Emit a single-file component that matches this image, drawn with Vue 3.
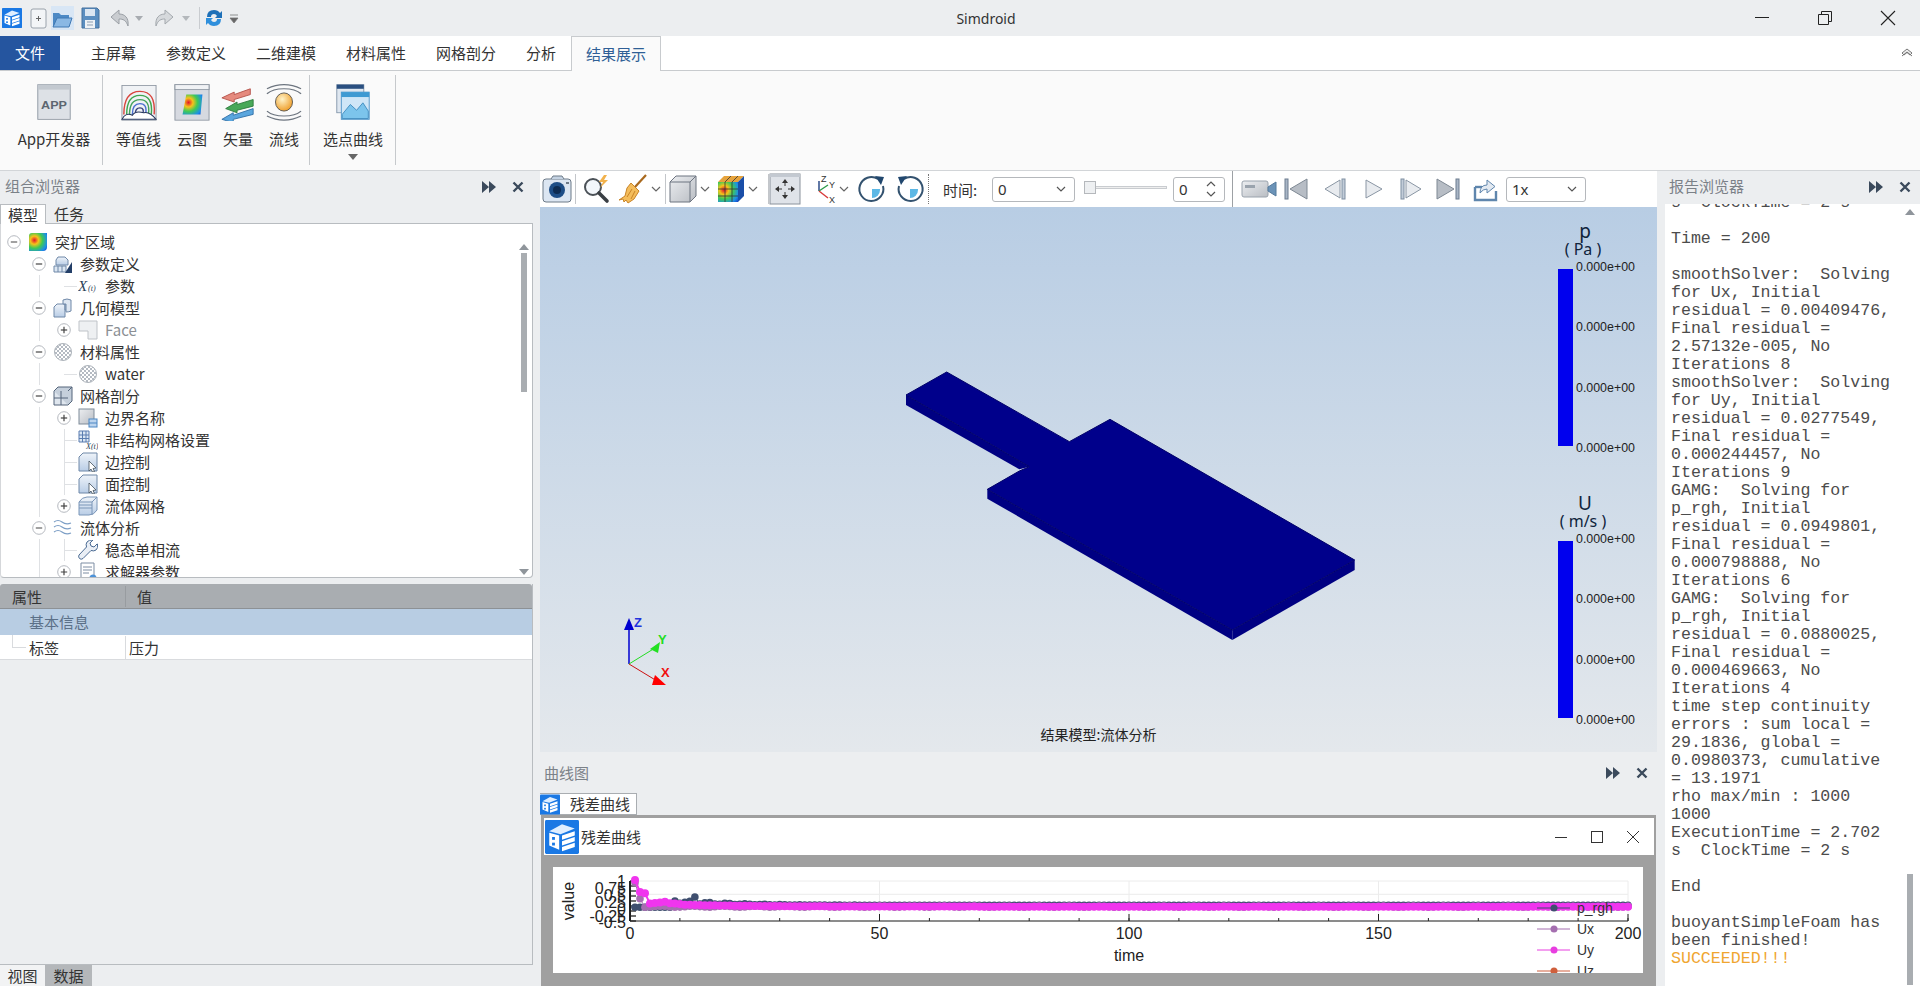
<template>
  <div class="app">
    <!-- shared icons -->
    <svg class="defs" width="0" height="0">
      <defs>
        <radialGradient id="g-heat" cx="0.3" cy="0.4" r="0.9">
          <stop offset="0" stop-color="#e3142b" />
          <stop offset="0.25" stop-color="#f6c21a" />
          <stop offset="0.5" stop-color="#3fca55" />
          <stop offset="0.8" stop-color="#1c8fe8" />
          <stop offset="1" stop-color="#1747c8" />
        </radialGradient>
        <linearGradient id="g-steel" x1="0" y1="0" x2="0" y2="1">
          <stop offset="0" stop-color="#eef3f9" />
          <stop offset="1" stop-color="#b9cde6" />
        </linearGradient>
        <linearGradient id="g-grey" x1="0" y1="0" x2="1" y2="1">
          <stop offset="0" stop-color="#eceef1" />
          <stop offset="1" stop-color="#b9bdc3" />
        </linearGradient>
        <radialGradient id="g-ball" cx="0.4" cy="0.35" r="0.7">
          <stop offset="0" stop-color="#fff3c8" />
          <stop offset="1" stop-color="#ee9a22" />
        </radialGradient>
        <pattern id="p-dots" width="4" height="4" patternUnits="userSpaceOnUse">
          <rect width="2" height="2" fill="#b4bac2" />
          <rect x="2" y="2" width="2" height="2" fill="#b4bac2" />
        </pattern>
      </defs>

      <symbol id="i-logo" viewBox="0 0 24 24">
        <rect width="24" height="24" rx="1" fill="#1a78e4" />
        <polygon points="3,8 12,3 21,6 11,10" fill="#dfeeff" />
        <polygon points="3,9 10,11 10,21 3,18" fill="#fff" />
        <rect x="5" y="12" width="2" height="2" fill="#1a78e4" />
        <rect x="5" y="16" width="2" height="2" fill="#1a78e4" />
        <polygon points="12,11 21,8 21,11 12,14" fill="#fff" />
        <polygon points="12,15 21,12 21,15 12,18" fill="#fff" />
        <polygon points="12,19 21,16 21,19 12,22" fill="#fff" />
      </symbol>

      <!-- tree icons -->
      <symbol id="t-root" viewBox="0 0 20 20">
        <path d="M4 1h15v14q0 4-4 4H1V4q0-3 3-3z" fill="url(#g-heat)" />
      </symbol>
      <symbol id="t-param" viewBox="0 0 20 20">
        <path d="M5 3h7l3 3v5H3V6z" fill="url(#g-steel)" stroke="#6f88a8" />
        <path d="M1 12h12v6H1z" fill="#dbe6f2" stroke="#6f88a8" />
        <path d="M5 12v6M9 12v6" stroke="#6f88a8" />
        <path d="M19 8v11h-7z" fill="#233f68" />
      </symbol>
      <symbol id="t-xt" viewBox="0 0 20 20">
        <text x="0" y="15" font-family="Liberation Serif, serif" font-style="italic" font-size="15" fill="#2c3f58">X</text>
        <text x="10" y="15" font-family="Liberation Serif, serif" font-style="italic" font-size="8" fill="#2c3f58">(t)</text>
      </symbol>
      <symbol id="t-geom" viewBox="0 0 20 20">
        <path d="M1 9l3-3h8v13H1z" fill="url(#g-steel)" stroke="#6f88a8" />
        <path d="M12 6v6h5" fill="none" stroke="#6f88a8" />
        <path d="M10 2q4-2 8 0v11q-2 1-5 1V6h-3z" fill="#dde6f1" stroke="#6f88a8" />
      </symbol>
      <symbol id="t-face" viewBox="0 0 20 20">
        <path d="M1 1h18v18h-9v-8H1z" fill="#eef0f2" stroke="#bfc3c8" />
      </symbol>
      <symbol id="t-mat" viewBox="0 0 20 20">
        <circle cx="10" cy="10" r="8.5" fill="url(#p-dots)" stroke="#aeb4bb" />
      </symbol>
      <symbol id="t-mesh" viewBox="0 0 20 20">
        <path d="M1 5h14v14H1z" fill="#dfe6ee" stroke="#54657a" />
        <path d="M1 5l4-4h14v14l-4 4" fill="#c5cfdb" stroke="#54657a" />
        <path d="M8 5v14M1 12h14M15 5l4-4" stroke="#54657a" fill="none" />
      </symbol>
      <symbol id="t-bc" viewBox="0 0 20 20">
        <rect x="1" y="1" width="15" height="15" fill="url(#g-grey)" stroke="#7f8b99" />
        <rect x="11" y="11" width="8" height="8" fill="#bcd4ee" stroke="#4d87c4" />
        <path d="M11 15h8" stroke="#4d87c4" />
      </symbol>
      <symbol id="t-unst" viewBox="0 0 20 20">
        <path d="M1 1h10v11H1z" fill="#dbe7f4" stroke="#5a7db0" />
        <path d="M4.5 1v11M8 1v11M1 5h10M1 8.500h10" stroke="#5a7db0" />
        <text x="8" y="19" font-family="Liberation Serif, serif" font-style="italic" font-size="8" fill="#2c3f58">X(t)</text>
      </symbol>
      <symbol id="t-ctrl" viewBox="0 0 20 20">
        <path d="M5 1h14v18H1V5z" fill="url(#g-steel)" stroke="#6f88a8" />
        <path d="M11 9l7 7-3 .500 1.500 3-2 .500-1.500-3-2 2z" fill="#fff" stroke="#44505c" stroke-width=".8" />
      </symbol>
      <symbol id="t-fmesh" viewBox="0 0 20 20">
        <path d="M1 6q3-5 8-5h10v13q-3 5-8 5H1z" fill="url(#g-steel)" stroke="#7b96b8" />
        <path d="M1 6h13v13M14 6l5-5M1 9h13M1 12h13" stroke="#7b96b8" fill="none" />
      </symbol>
      <symbol id="t-flow" viewBox="0 0 20 20">
        <g fill="none" stroke="#7d9fc6" stroke-width="1.200">
          <path d="M1 4q4-3 8 0t9 1" />
          <path d="M1 9q4-3 8 0t9 1" />
          <path d="M1 14q4-3 8 0t9 1" />
        </g>
      </symbol>
      <symbol id="t-wrench" viewBox="0 0 20 20">
        <path d="M19 4l-3 3-3-1-1-3 3-3q-4-.500-6 2-1.500 2-.500 5L1 15q-1 2 .500 3.500t3.500 0l8-8q3 1 5-.500 2.500-2 1.500-6z" fill="#e9eef5" stroke="#4a6a92" />
      </symbol>
      <symbol id="t-solver" viewBox="0 0 20 20">
        <path d="M3 1h13v17H3z" fill="#fff" stroke="#7c8da3" />
        <path d="M5 5h9M5 8h9M5 11h6" stroke="#7c8da3" />
        <circle cx="15" cy="16" r="3.500" fill="#4d92d8" />
      </symbol>
    </svg>

    <!-- title bar -->
    <header class="titlebar">
      <div class="qat">
        <svg class="ml2" width="20" height="24"><use href="#i-logo" /></svg>
        <svg class="ml6" width="20" height="24" viewBox="0 0 20 24">
          <rect x="3" y="3" width="15" height="19" rx="2" fill="#f3f5f7" stroke="#9aa2ab" />
          <path d="M8 12.500h5M10.500 10v5" stroke="#666" />
        </svg>
        <span class="open-hl ml3">
          <svg width="21" height="24" viewBox="0 0 21 24">
            <path d="M1 7h6l2 2h8v3H7l-3 8H1z" fill="#4c89c5" />
            <path d="M5 12h15l-3 9H1z" fill="#8ab8e4" stroke="#3f78b4" />
          </svg>
        </span>
        <svg class="ml6" width="20" height="24" viewBox="0 0 20 24">
          <path d="M2 2h15l2 2v18H2z" fill="#5b8ec0" stroke="#44719e" />
          <rect x="5" y="3" width="10" height="7" fill="#dbe6f2" />
          <rect x="5" y="14" width="10" height="8" fill="#eef2f6" />
          <path d="M7 16h6M7 19h6" stroke="#8b9db0" />
        </svg>
        <svg class="ml9" width="22" height="24" viewBox="0 0 22 24">
          <path d="M10 4L2 11l8 7v-5c4 0 7 1 9 7 1-8-3-12-9-12z" fill="#c9ccd0" stroke="#9a9fa5" />
        </svg>
        <svg class="ml3" width="10" height="24" viewBox="0 0 10 24"><path d="M1 10h8l-4 5z" fill="#a8acb1" /></svg>
        <svg class="ml9" width="22" height="24" viewBox="0 0 22 24">
          <path d="M12 4l8 7-8 7v-5c-4 0-7 1-9 7-1-8 3-12 9-12z" fill="#d6d9dc" stroke="#a4a9ae" />
        </svg>
        <svg class="ml6" width="10" height="24" viewBox="0 0 10 24"><path d="M1 10h8l-4 5z" fill="#b4b8bc" /></svg>
        <i class="qsep ml8"></i>
        <svg class="ml4" width="20" height="24" viewBox="0 0 20 24">
          <path d="M3 11q0-7 7-7 4 0 6 3l2-2v7h-7l2-2q-1-2-3-2-3 0-3 3z" fill="#1e70b8" />
          <path d="M17 13q0 7-7 7-4 0-6-3l-2 2v-7h7l-2 2q1 2 3 2 3 0 3-3z" fill="#2f8fdc" />
        </svg>
        <svg class="ml5" width="10" height="24" viewBox="0 0 10 24"><path d="M1 9h8M1 12h8l-4 5z" fill="#666" stroke="#777" stroke-width=".8" /></svg>
      </div>
      <div class="app-title">Simdroid</div>
      <div class="win-btns">
        <svg width="16" height="16" viewBox="0 0 16 16"><path d="M1 7.500h14" stroke="#222" /></svg>
        <svg class="restore" width="16" height="16" viewBox="0 0 16 16"><path d="M1.500 4.500h10v10h-10zM4.500 4.500v-3h10v10h-3" fill="none" stroke="#222" /></svg>
        <svg class="closex" width="16" height="16" viewBox="0 0 16 16"><path d="M1 1l14 14M15 1L1 15" stroke="#222" stroke-width="1.100" /></svg>
      </div>
    </header>

    <!-- ribbon tabs -->
    <nav class="tabbar">
      <div class="file-tab">文件</div>
      <div class="tabs">
        <span v-for="t in ribbonTabs" :key="t" class="rtab" :class="{ active: t === '结果展示' }">{{ t }}</span>
      </div>
      <svg class="collapse" width="14" height="12" viewBox="0 0 14 12">
        <path d="M2 6l5-4 5 4-2 2-3-2.500L4 8z" fill="#eee" stroke="#777" />
        <path d="M2 9l5-4 5 4" fill="none" stroke="#777" />
      </svg>
    </nav>

    <!-- ribbon -->
    <section class="ribbon">
      <div class="rgroup g1">
        <div class="rbtn">
          <svg width="36" height="38" viewBox="0 0 40 46" preserveAspectRatio="none">
            <rect x="2" y="2" width="36" height="42" fill="#dde1e6" stroke="#8c95a0" />
            <rect x="2" y="2" width="36" height="6" fill="#c3c9d0" />
            <text x="20" y="31" text-anchor="middle" font-family="Liberation Sans, sans-serif" font-weight="700" font-size="14" fill="#5c6670">APP</text>
          </svg>
          <span>App开发器</span>
        </div>
      </div>
      <div class="rgroup g2">
        <div class="rbtn w61">
          <svg width="36" height="38" viewBox="0 0 38 46" preserveAspectRatio="none">
            <rect x="1" y="3" width="36" height="42" fill="#f0f2f5" stroke="#8c95a0" />
            <g fill="none" stroke-width="1.500">
              <path d="M3 38q0-28 17-28t15 28" stroke="#d8453e" />
              <path d="M6 38q0-23 14-23t12 23" stroke="#3fa650" />
              <path d="M9 38q0-18 11-18t9 18" stroke="#45a35d" />
              <path d="M12 38q0-13 8-13t6 13" stroke="#4b6fd0" />
              <path d="M15 38q0-8 5-8t3 8" stroke="#333e7a" />
            </g>
            <path d="M1 44q4-9 11-5 3-6 12-3 6-2 13 8z" fill="#fff" stroke="#26365c" stroke-width="1.200" />
          </svg>
          <span>等值线</span>
        </div>
        <div class="rbtn w46">
          <svg width="36" height="38" viewBox="0 0 38 46" preserveAspectRatio="none">
            <rect x="1" y="2" width="36" height="43" fill="#d6d9e0" stroke="#8c95a0" />
            <rect x="1" y="2" width="36" height="6" fill="#f0f2f5" stroke="#8c95a0" />
            <path d="M13 14h17l-2 24H9z" fill="url(#g-heat)" />
          </svg>
          <span>云图</span>
        </div>
        <div class="rbtn w46">
          <svg width="36" height="38" viewBox="0 0 38 46" preserveAspectRatio="none">
            <path d="M2 18l13-7v3l17-7v7l-17 6v3z" fill="#e58a7e" stroke="#b35048" />
            <path d="M6 31l12-8v3l17-6v8l-17 5v3z" fill="#48a858" stroke="#2d7b3d" />
            <path d="M2 44l12-8v3l21-8v7l-21 6v4z" fill="#5aa6de" stroke="#2f6fa6" />
          </svg>
          <span>矢量</span>
        </div>
        <div class="rbtn w46">
          <svg width="36" height="38" viewBox="0 0 38 46" preserveAspectRatio="none">
            <g fill="none" stroke="#6e7680" stroke-width="1.400">
              <path d="M1 7q18-10 36 0" />
              <path d="M1 13q6-6 18-6t18 6" />
              <path d="M1 34q6 6 18 6t18-6" />
              <path d="M1 40q18 10 36 0" />
            </g>
            <ellipse cx="19" cy="23" rx="9" ry="11" fill="url(#g-ball)" stroke="#55514a" />
          </svg>
          <span>流线</span>
        </div>
      </div>
      <div class="rgroup g3">
        <div class="rbtn">
          <svg width="36" height="38" viewBox="0 0 40 46" preserveAspectRatio="none">
            <rect x="2" y="2" width="30" height="34" fill="#dfe7f0" stroke="#7f93a8" />
            <rect x="2" y="2" width="30" height="5" fill="#2a4f80" />
            <rect x="7" y="11" width="31" height="33" fill="#cfe6f7" stroke="#4b93c7" />
            <rect x="7" y="11" width="31" height="6" fill="#3f9ad2" />
            <path d="M8 38l9-12 7 7 7-9 6 10v9H8z" fill="#7cc4ec" stroke="#3a87bc" />
          </svg>
          <span>选点曲线</span>
          <svg class="rdrop" width="12" height="7" viewBox="0 0 12 7"><path d="M1 0h10L6 6z" fill="#666" /></svg>
        </div>
      </div>
    </section>

    <main class="main">
      <!-- left dock -->
      <aside class="left">
        <div class="dock-head">
          <span class="dock-title">组合浏览器</span>
          <svg class="dbl" width="14" height="12" viewBox="0 0 14 12"><path d="M0 0l7 6-7 6zM7 0l7 6-7 6z" fill="#3b4a5c" /></svg>
          <svg class="xbtn" width="12" height="12" viewBox="0 0 12 12"><path d="M1.500 1.500l9 9M10.500 1.500l-9 9" stroke="#3b4a5c" stroke-width="2.400" /></svg>
        </div>
        <div class="subtabs">
          <span class="subtab active">模型</span>
          <span class="subtab">任务</span>
        </div>
        <div class="tree">
          <div v-for="(row, i) in rows" :key="i" class="row">
            <i v-for="g in row.lines" :key="g" class="vline" :style="{ left: g + 'px' }"></i>
            <i v-if="row.leaf" class="hline" :style="{ left: row.level * 25 + 13 + 'px' }"></i>
            <span class="indent" :style="{ width: row.level * 25 + 5 + 'px' }"></span>
            <span class="toggle">
              <svg v-if="row.toggle" width="14" height="14" viewBox="0 0 14 14">
                <circle cx="7" cy="7" r="6.300" fill="#fff" stroke="#b5b9bf" />
                <path d="M3.800 7h6.400" stroke="#444" stroke-width="1.200" />
                <path v-if="row.toggle === '+'" d="M7 3.800v6.400" stroke="#444" stroke-width="1.200" />
              </svg>
            </span>
            <svg class="ticon" width="20" height="20"><use :href="'#t-' + row.icon" /></svg>
            <span class="tlabel" :class="{ dim: row.dim }">{{ row.label }}</span>
          </div>
          <svg class="sb-up" width="10" height="6" viewBox="0 0 10 6"><path d="M5 0l5 6H0z" fill="#8f959b" /></svg>
          <i class="sb-thumb"></i>
          <svg class="sb-down" width="10" height="6" viewBox="0 0 10 6"><path d="M0 0h10L5 6z" fill="#8f959b" /></svg>
        </div>
        <div class="props">
          <div class="prop-head">
            <span class="c1">属性</span>
            <span class="c2">值</span>
          </div>
          <div class="prop-group">基本信息</div>
          <div class="prop-row">
            <i class="prop-hook"></i>
            <span class="c1">标签</span>
            <span class="c2 val">压力</span>
          </div>
        </div>
        <div class="bottom-tabs">
          <span class="btab">视图</span>
          <span class="btab on">数据</span>
        </div>
      </aside>

      <!-- center -->
      <section class="center">
        <div class="toolbar">
          <svg class="ml1" width="32" height="30" viewBox="0 0 32 30">
            <rect x="2" y="5" width="28" height="23" rx="3" fill="#dce6f2" stroke="#6d7a88" />
            <path d="M10 5l2-3h9l2 3" fill="#c4d2e2" stroke="#6d7a88" />
            <circle cx="16" cy="16" r="8" fill="#1d4d86" />
            <circle cx="16" cy="16" r="4" fill="#0d2b52" />
            <rect x="25" y="8" width="3" height="2" fill="#6d7a88" />
          </svg>
          <i class="tsep ml2"></i>
          <svg class="ml6" width="30" height="30" viewBox="0 0 30 30">
            <circle cx="11" cy="13" r="8" fill="#f3f7fb" stroke="#4b5157" stroke-width="2" />
            <path d="M17 19l8 8" stroke="#3a3f44" stroke-width="3.600" stroke-linecap="round" />
            <path d="M22 1l-5 7h4l-3 6 8-8h-4l3-5z" fill="#f2b24c" />
          </svg>
          <svg class="ml6" width="30" height="30" viewBox="0 0 30 30">
            <path d="M28 1L17 13" stroke="#a9691e" stroke-width="2.200" />
            <path d="M13 9l8 8-5 8-6 4-2-3-2 2-1-3-4 1 6-4 2-8z" fill="#f4bd5c" stroke="#c98427" />
            <path d="M14 15l-5 8M17 17l-4 8" stroke="#c98427" />
          </svg>
          <svg class="ml3" width="10" height="30" viewBox="0 0 10 30"><path d="M1 13l4 4 4-4" fill="none" stroke="#666" stroke-width="1.200" /></svg>
          <i class="tsep ml4"></i>
          <svg class="ml2" width="30" height="30" viewBox="0 0 30 30">
            <path d="M2 8l6-6h20v20l-6 6H2z" fill="url(#g-grey)" stroke="#6d7480" />
            <path d="M2 8h20v20M22 8l6-6" fill="none" stroke="#6d7480" />
          </svg>
          <svg class="ml2" width="10" height="30" viewBox="0 0 10 30"><path d="M1 13l4 4 4-4" fill="none" stroke="#666" stroke-width="1.200" /></svg>
          <svg class="ml6" width="30" height="30" viewBox="0 0 30 30">
            <path d="M2 8h20v20H2z" fill="url(#g-heat)" />
            <path d="M2 8l6-6h20l-6 6z" fill="#e6a33c" />
            <path d="M22 8l6-6v20l-6 6z" fill="#1a4ea8" />
            <path d="M9 8v20M16 8v20M2 15h20M2 22h20M9 8l6-6M16 8l6-6" stroke="#333" stroke-width=".8" />
          </svg>
          <svg class="ml2" width="10" height="30" viewBox="0 0 10 30"><path d="M1 13l4 4 4-4" fill="none" stroke="#666" stroke-width="1.200" /></svg>
          <i class="tsep ml10"></i>
          <svg width="32" height="32" viewBox="0 0 32 32">
            <rect x="1" y="1" width="30" height="30" fill="#dfe3e9" stroke="#8a929c" />
            <rect x="1" y="1" width="30" height="3" fill="#c3c9d1" />
            <path d="M16 10v3M16 19v3M10 16h3M19 16h3" stroke="#333" />
            <path d="M16 6l-3 4h6zM16 26l-3-4h6zM6 16l4-3v6zM26 16l-4-3v6z" fill="#333" />
          </svg>
          <svg class="ml10" width="28" height="30" viewBox="0 0 28 30">
            <path d="M8 17V7" stroke="#1f3f80" stroke-width="1.400" />
            <path d="M8 17l9-6" stroke="#2b9a48" stroke-width="1.400" />
            <path d="M8 17l9 7" stroke="#d83a3a" stroke-width="1.400" />
            <text x="10" y="8" font-family="Liberation Sans, sans-serif" font-size="9" fill="#333">Z</text>
            <text x="18" y="14" font-family="Liberation Sans, sans-serif" font-size="9" fill="#333">Y</text>
            <text x="18" y="29" font-family="Liberation Sans, sans-serif" font-size="9" fill="#333">X</text>
          </svg>
          <svg width="10" height="30" viewBox="0 0 10 30"><path d="M1 13l4 4 4-4" fill="none" stroke="#666" stroke-width="1.200" /></svg>
          <svg class="ml8" width="30" height="30" viewBox="0 0 30 30">
            <path d="M15 15h8v1a8 8 0 0 1-8 8z" fill="#5cb8e6" />
            <path d="M21 5a12 12 0 1 0 5 7" fill="none" stroke="#33526f" stroke-width="2" />
            <path d="M18 2l9 1-3 8z" fill="#21476e" />
          </svg>
          <svg class="ml8" width="30" height="30" viewBox="0 0 30 30">
            <path d="M15 15h8v1a8 8 0 0 1-8 8z" fill="#5cb8e6" />
            <path d="M9 5a12 12 0 1 1-5 7" fill="none" stroke="#33526f" stroke-width="2" />
            <path d="M12 2L3 3l3 8z" fill="#21476e" />
          </svg>
          <i class="tdots ml3"></i>
          <span class="time-label ml14">时间:</span>
          <div class="combo w83 ml15">
            <span>0</span>
            <svg width="10" height="6" viewBox="0 0 10 6"><path d="M1 1l4 4 4-4" fill="none" stroke="#555" stroke-width="1.200" /></svg>
          </div>
          <div class="slider ml9"><i class="thumb"></i></div>
          <div class="spin ml6">
            <span>0</span>
            <svg width="10" height="20" viewBox="0 0 10 20">
              <path d="M1 7l4-4 4 4M1 13l4 4 4-4" fill="none" stroke="#555" stroke-width="1.200" />
            </svg>
          </div>
          <i class="tsep tall ml7"></i>
          <svg class="ml8" width="36" height="24" viewBox="0 0 36 24">
            <rect x="1" y="4" width="26" height="16" rx="2" fill="url(#g-grey)" stroke="#9aa3ad" />
            <rect x="4" y="8" width="10" height="3" fill="#9aa3ad" />
            <path d="M27 10l8-5v14l-8-5z" fill="#6b93b8" stroke="#557a9c" />
          </svg>
          <svg class="ml6" width="26" height="26" viewBox="0 0 26 26">
            <rect x="2" y="3" width="3" height="20" fill="#a9b6c6" stroke="#6d7d90" />
            <path d="M24 3v20L7 13z" fill="#b7bdc5" stroke="#7f8994" />
          </svg>
          <svg class="ml13" width="26" height="26" viewBox="0 0 26 26">
            <path d="M18 4v18L3 13z" fill="#e8ebef" stroke="#8a96a4" />
            <rect x="20" y="3" width="3" height="20" fill="#c2ccd8" stroke="#7f8fa2" />
          </svg>
          <svg class="ml12" width="26" height="26" viewBox="0 0 26 26">
            <path d="M6 4v18l16-9z" fill="#e8ebef" stroke="#8a96a4" />
          </svg>
          <svg class="ml12" width="26" height="26" viewBox="0 0 26 26">
            <rect x="3" y="3" width="3" height="20" fill="#c2ccd8" stroke="#7f8fa2" />
            <path d="M8 4v18l15-9z" fill="#e8ebef" stroke="#8a96a4" />
          </svg>
          <svg class="ml11" width="26" height="26" viewBox="0 0 26 26">
            <path d="M2 3v20l17-10z" fill="#b7bdc5" stroke="#7f8994" />
            <rect x="21" y="3" width="3" height="20" fill="#a9b6c6" stroke="#6d7d90" />
          </svg>
          <svg class="ml11" width="26" height="26" viewBox="0 0 26 26">
            <path d="M3 11v13h21V15" fill="none" stroke="#5f86ad" stroke-width="2.400" />
            <path d="M3 11h7" stroke="#5f86ad" stroke-width="2.400" />
            <path d="M8 17q0-8 7-8V4l8 6.500-8 6.500v-4q-4 0-7 4z" fill="#e2e9f1" stroke="#5f86ad" />
          </svg>
          <div class="combo w80 ml8">
            <span>1x</span>
            <svg width="10" height="6" viewBox="0 0 10 6"><path d="M1 1l4 4 4-4" fill="none" stroke="#555" stroke-width="1.200" /></svg>
          </div>
        </div>

        <div class="viewport">
          <svg class="model" width="500" height="300" viewBox="0 0 1500 900">
            <polygon points="78,105 78,135 418,328 448,320" fill="#000082" />
            <polygon points="322,388 322,416 1057,840 1057,810" fill="#000082" />
            <polygon points="1057,810 1057,840 1424,630 1424,600" fill="#000082" />
            <polygon points="78,105 200,36 568,245 690,178 1424,600 1057,810 322,388 418,333 448,320" fill="#00008b" stroke="#000068" stroke-width="3" />
          </svg>

          <svg class="triad" width="70" height="80" viewBox="0 0 70 80">
            <line x1="20" y1="50" x2="20" y2="10" stroke="#0000d0" stroke-width="1.500" />
            <path d="M20 4l5 12H15z" fill="#0000d0" />
            <line x1="20" y1="50" x2="46" y2="34" stroke="#22dd22" />
            <path d="M51 28l-2 11-8-4z" fill="#22e022" />
            <line x1="20" y1="50" x2="48" y2="67" stroke="#cc1111" />
            <path d="M46 61l11 10H43z" fill="#f00" />
            <text x="25" y="13" font-family="Liberation Sans, sans-serif" font-weight="700" font-size="13" fill="#2233dd">Z</text>
            <text x="49" y="30" font-family="Liberation Sans, sans-serif" font-weight="700" font-size="13" fill="#22dd22">Y</text>
            <text x="52" y="63" font-family="Liberation Sans, sans-serif" font-weight="700" font-size="13" fill="#f01010">X</text>
          </svg>

          <div v-for="bar in bars" :key="bar.name" class="legend" :class="bar.cls">
            <div class="lg-name">{{ bar.name }}</div>
            <div class="lg-unit">( {{ bar.unit }} )</div>
            <div class="lg-body">
              <i class="lg-bar"></i>
              <div class="lg-ticks"><span v-for="n in 4" :key="n">0.000e+00</span></div>
            </div>
          </div>

          <div class="result-cap">结果模型:流体分析</div>
        </div>

        <div class="curve-dock">
          <div class="curve-head">
            <span class="dock-title">曲线图</span>
            <svg class="dbl" width="14" height="12" viewBox="0 0 14 12"><path d="M0 0l7 6-7 6zM7 0l7 6-7 6z" fill="#3b4a5c" /></svg>
            <svg class="xbtn" width="12" height="12" viewBox="0 0 12 12"><path d="M1.500 1.500l9 9M10.500 1.500l-9 9" stroke="#3b4a5c" stroke-width="2.400" /></svg>
          </div>
          <div class="curve-tab">
            <svg width="20" height="21"><use href="#i-logo" /></svg>
            <span>残差曲线</span>
          </div>
          <div class="curve-win">
            <div class="win-bar">
              <svg class="win-logo" width="34" height="34"><use href="#i-logo" /></svg>
              <span class="win-title">残差曲线</span>
              <svg width="14" height="14" viewBox="0 0 14 14"><path d="M1 7.500h12" stroke="#333" /></svg>
              <svg class="wb2" width="14" height="14" viewBox="0 0 14 14"><rect x="1.500" y="1.500" width="11" height="11" fill="none" stroke="#333" /></svg>
              <svg class="wb3" width="14" height="14" viewBox="0 0 14 14"><path d="M1 1l12 12M13 1L1 13" stroke="#333" /></svg>
            </div>
            <div class="plot">
              <svg width="1090" height="106" viewBox="0 0 1090 106" font-family="Liberation Sans, sans-serif">
                <line v-for="g in yTicks" :key="'g' + g" x1="77" :y1="g" x2="1075" :y2="g" stroke="#ececec" />
                <line v-for="t in 5" :key="'v' + t" :x1="77 + (t - 1) * 249.5" y1="14" :x2="77 + (t - 1) * 249.5" y2="54" stroke="#ececec" />
                <g stroke="#222">
                  <line x1="77" y1="54" x2="1075" y2="54" />
                  <line x1="77" y1="14" x2="77" y2="54" stroke-width="2" />
                  <line v-for="m in minorX" :key="'m' + m" :x1="m" y1="54" :x2="m" y2="51" />
                  <line v-for="t in 4" :key="'mx' + t" :x1="77 + t * 249.5" y1="54" :x2="77 + t * 249.5" y2="47" />
                  <line v-for="g in yMinor" :key="'y' + g" x1="77" :y1="g" x2="83" :y2="g" stroke-width="1.300" />
                </g>
                <polyline :points="line(pRgh)" fill="none" stroke="#3f4f6f" />
                <circle v-for="(p, i) in pRgh" :key="'p' + i" :cx="p.x" :cy="p.y" r="3.800" fill="#3f4f6f" />
                <polyline :points="line(ux)" fill="none" stroke="#a56fb0" />
                <circle v-for="(p, i) in ux" :key="'x' + i" :cx="p.x" :cy="p.y" r="3.800" fill="#a56fb0" />
                <polyline :points="line(uy)" fill="none" stroke="#f035ee" stroke-width="2" />
                <circle v-for="(p, i) in uy" :key="'u' + i" :cx="p.x" :cy="p.y" r="4" fill="#f035ee" />

                <text v-for="(l, i) in yLabels" :key="l" x="73" :y="20 + i * 6.9" text-anchor="end" font-size="16" fill="#222">{{ l }}</text>
                <text v-for="t in 5" :key="'tx' + t" :x="77 + (t - 1) * 249.5" y="72" text-anchor="middle" font-size="16" fill="#222">{{ (t - 1) * 50 }}</text>
                <text transform="translate(21,34) rotate(-90)" text-anchor="middle" font-size="16" fill="#222">value</text>
                <text x="576" y="94" text-anchor="middle" font-size="16" fill="#222">time</text>

                <g v-for="lg in plotLegend" :key="lg.name">
                  <line x1="984" :y1="lg.y" x2="1017" :y2="lg.y" :stroke="lg.color" />
                  <circle cx="1001" :cy="lg.y" r="3.500" :fill="lg.color" />
                  <text x="1024" :y="lg.y + 5" font-size="14" fill="#333">{{ lg.name }}</text>
                </g>
              </svg>
            </div>
          </div>
        </div>
      </section>

      <!-- right dock -->
      <aside class="right">
        <div class="dock-head right-head">
          <span class="dock-title">报告浏览器</span>
          <svg class="dbl" width="14" height="12" viewBox="0 0 14 12"><path d="M0 0l7 6-7 6zM7 0l7 6-7 6z" fill="#3b4a5c" /></svg>
          <svg class="xbtn" width="12" height="12" viewBox="0 0 12 12"><path d="M1.500 1.500l9 9M10.500 1.500l-9 9" stroke="#3b4a5c" stroke-width="2.400" /></svg>
        </div>
        <div class="report">
          <pre class="log">{{ logText }}</pre>
          <pre class="log ok">SUCCEEDED!!!</pre>
          <svg class="rs-up" width="10" height="6" viewBox="0 0 10 6"><path d="M5 0l5 6H0z" fill="#8f959b" /></svg>
          <i class="rs-thumb"></i>
        </div>
      </aside>
    </main>
  </div>
</template>

<script setup>
const ribbonTabs = ['主屏幕', '参数定义', '二维建模', '材料属性', '网格剖分', '分析', '结果展示']

// lines: x positions of the vertical guides that run through a row
const rows = [
  { level: 0, toggle: '-', icon: 'root', label: '突扩区域', lines: [] },
  { level: 1, toggle: '-', icon: 'param', label: '参数定义', lines: [] },
  { level: 2, leaf: true, icon: 'xt', label: '参数', lines: [38] },
  { level: 1, toggle: '-', icon: 'geom', label: '几何模型', lines: [] },
  { level: 2, toggle: '+', icon: 'face', label: 'Face', dim: true, lines: [38] },
  { level: 1, toggle: '-', icon: 'mat', label: '材料属性', lines: [] },
  { level: 2, leaf: true, icon: 'mat', label: 'water', lines: [38] },
  { level: 1, toggle: '-', icon: 'mesh', label: '网格剖分', lines: [] },
  { level: 2, toggle: '+', icon: 'bc', label: '边界名称', lines: [38] },
  { level: 2, leaf: true, icon: 'unst', label: '非结构网格设置', lines: [38, 63] },
  { level: 2, leaf: true, icon: 'ctrl', label: '边控制', lines: [38, 63] },
  { level: 2, leaf: true, icon: 'ctrl', label: '面控制', lines: [38, 63] },
  { level: 2, toggle: '+', icon: 'fmesh', label: '流体网格', lines: [38] },
  { level: 1, toggle: '-', icon: 'flow', label: '流体分析', lines: [] },
  { level: 2, leaf: true, icon: 'wrench', label: '稳态单相流', lines: [38, 63] },
  { level: 2, toggle: '+', icon: 'solver', label: '求解器参数', lines: [38] },
]

const bars = [
  { name: 'p', unit: 'Pa', cls: 'lg-p' },
  { name: 'U', unit: 'm/s', cls: 'lg-u' },
]

// chart scale
const px = (t) => 77 + t * 4.99
const py = (v) => 13 + ((1 - v) / 1.5) * 40
const series = (fn) => Array.from({ length: 200 }, (_, i) => ({ x: px(i + 1), y: py(fn(i + 1)) }))
const line = (pts) => pts.map((p) => p.x + ',' + p.y).join(' ')

const uyHead = [1, 0.55, 0.5, 0.12, 0.14, 0.16, 0.18, 0.13, 0.12, 0.1]
const uy = series((t) => (t <= 10 ? uyHead[t - 1] : 0.08 * Math.exp(-(t - 10) / 15)))
const ux = series((t) => (t === 1 ? 0.9 : t === 2 ? 0.3 : 0.02 * Math.cos(t)))
const pRgh = series((t) => {
  if (t === 13) return 0.36
  if (t < 9) return -0.02
  return 0.05 + 0.2 * Math.exp(-(t - 9) / 11) * (0.7 + 0.3 * Math.sin(t * 1.7))
})

const yLabels = ['1', '0.75', '0.5', '0.25', '0', '-0.25', '-0.5']
const yTicks = [14, 27.3, 40.7, 54]
const yMinor = Array.from({ length: 9 }, (_, i) => 14 + i * 5)
const minorX = Array.from({ length: 20 }, (_, i) => 77 + (i + 1) * 49.9)

const plotLegend = [
  { name: 'p_rgh', color: '#3f4f6f', y: 41 },
  { name: 'Ux', color: '#a56fb0', y: 62 },
  { name: 'Uy', color: '#e83ee0', y: 83 },
  { name: 'Uz', color: '#cf5f3c', y: 104 },
]

const logText = `s  ClockTime = 2 s

Time = 200

smoothSolver:  Solving
for Ux, Initial
residual = 0.00409476,
Final residual =
2.57132e-005, No
Iterations 8
smoothSolver:  Solving
for Uy, Initial
residual = 0.0277549,
Final residual =
0.000244457, No
Iterations 9
GAMG:  Solving for
p_rgh, Initial
residual = 0.0949801,
Final residual =
0.000798888, No
Iterations 6
GAMG:  Solving for
p_rgh, Initial
residual = 0.0880025,
Final residual =
0.000469663, No
Iterations 4
time step continuity
errors : sum local =
29.1836, global =
0.0980373, cumulative
= 13.1971
rho max/min : 1000
1000
ExecutionTime = 2.702
s  ClockTime = 2 s

End

buoyantSimpleFoam has
been finished!`
</script>

<style>
html,
body {
  margin: 0;
  overflow: hidden;
}
</style>

<style scoped>
.app {
  width: 1920px;
  height: 986px;
  display: flex;
  flex-direction: column;
  overflow: hidden;
  background: #eceef0;
  font-family: "Noto Sans CJK SC", "Liberation Sans", sans-serif;
  font-size: 15px;
  color: #333;
}

.defs {
  position: absolute;
}

svg {
  display: block;
  flex: none;
}

i {
  display: block;
}

.ml1 { margin-left: 1px; }
.ml2 { margin-left: 2px; }
.ml3 { margin-left: 3px; }
.ml4 { margin-left: 4px; }
.ml5 { margin-left: 5px; }
.ml6 { margin-left: 6px; }
.ml7 { margin-left: 7px; }
.ml8 { margin-left: 8px; }
.ml9 { margin-left: 9px; }
.ml10 { margin-left: 10px; }
.ml11 { margin-left: 11px; }
.ml12 { margin-left: 12px; }
.ml13 { margin-left: 13px; }
.ml14 { margin-left: 14px; }
.ml15 { margin-left: 15px; }

/* title bar */
.titlebar {
  height: 36px;
  flex: none;
  display: grid;
  grid-template-columns: 1fr auto 1fr;
  align-items: center;
  padding-left: 52px;
  background: #eceef0;
}

.qat {
  display: flex;
  align-items: center;
  margin-left: -52px;
}

.open-hl {
  width: 23px;
  height: 24px;
  display: flex;
  justify-content: center;
  background: #d8e6f5;
}

.qsep {
  width: 1px;
  height: 22px;
  background: #c9ccd0;
}

.app-title {
  font-size: 14px;
  color: #333;
  font-family: "Noto Sans", sans-serif;
}

.win-btns {
  display: flex;
  justify-content: flex-end;
  align-items: center;
  padding-right: 24px;
}

.restore {
  margin-left: 47px;
}

.closex {
  margin-left: 47px;
}

/* ribbon tabs */
.tabbar {
  height: 35px;
  flex: none;
  display: flex;
  background: #fff;
  border-bottom: 1px solid #c8cbce;
  box-sizing: border-box;
  position: relative;
}

.file-tab {
  width: 60px;
  background: #25559f;
  color: #fff;
  text-align: center;
  line-height: 34px;
}

.tabs {
  display: flex;
  margin-left: 16px;
}

.rtab {
  padding: 0 15px;
  line-height: 34px;
  white-space: nowrap;
}

.rtab.active {
  color: #2f5f96;
  background: #fafafa;
  border: 1px solid #c8cbce;
  border-bottom: 0;
  margin-bottom: -1px;
  padding: 0 14px;
  line-height: 33px;
}

.collapse {
  margin-left: auto;
  margin-right: 6px;
  align-self: center;
}

/* ribbon */
.ribbon {
  height: 100px;
  flex: none;
  display: flex;
  background: #fafafa;
  border-bottom: 1px solid #d2d5d8;
  box-sizing: border-box;
}

.rgroup {
  display: flex;
  margin: 4px 0 5px;
  border-right: 1px solid #c6c9cc;
  box-sizing: border-box;
}

.g1 {
  width: 103px;
  justify-content: center;
  padding-left: 6px;
}

.g2 {
  width: 207px;
  padding-left: 5px;
}

.g3 {
  width: 86px;
  padding-left: 5px;
}

.rbtn {
  display: flex;
  flex-direction: column;
  align-items: center;
  padding: 8px 8px 0;
  box-sizing: border-box;
  font-size: 15px;
  line-height: 20px;
  white-space: nowrap;
}

.w61 {
  width: 61px;
}

.w46 {
  width: 46px;
}

.rbtn span {
  margin-top: 8px;
}

.rdrop {
  margin-top: 5px;
}

/* main */
.main {
  flex: 1;
  min-height: 0;
  display: flex;
}

.left {
  width: 533px;
  flex: none;
  display: flex;
  flex-direction: column;
}

.dock-head {
  height: 33px;
  flex: none;
  display: flex;
  align-items: center;
  padding-left: 5px;
  padding-right: 9px;
}

.dock-title {
  color: #7b8188;
  font-size: 15px;
  margin-right: auto;
}

.dock-head .dock-title {
  margin-top: -5px;
}

.dock-head svg {
  margin-top: -2px;
}

.xbtn {
  margin-left: 16px;
}

.subtabs {
  height: 19px;
  flex: none;
  display: flex;
  position: relative;
}

.subtab {
  width: 46px;
  text-align: center;
  line-height: 19px;
  box-sizing: border-box;
}

.subtab.active {
  background: #fff;
  border: 1px solid #b8bcc0;
  border-bottom: 0;
  height: 20px;
  position: relative;
  z-index: 1;
}

.tree {
  height: 355px;
  flex: none;
  position: relative;
  overflow: hidden;
  background: #fff;
  border: 1px solid #b8bcc0;
  border-left-color: #d5d7da;
  border-radius: 0 0 4px 4px;
  box-sizing: border-box;
  padding-top: 7px;
}

.row {
  height: 22px;
  display: flex;
  align-items: center;
  position: relative;
}

.vline {
  position: absolute;
  top: 0;
  bottom: 0;
  width: 1px;
  background: #dfe1e4;
}

.hline {
  position: absolute;
  top: 11px;
  width: 13px;
  height: 1px;
  background: #dfe1e4;
}

.indent {
  flex: none;
}

.toggle {
  width: 16px;
  flex: none;
  display: flex;
  justify-content: center;
  position: relative;
}

.ticon {
  margin-left: 6px;
  position: relative;
}

.tlabel {
  margin-left: 7px;
  line-height: 22px;
  white-space: nowrap;
}

.tlabel.dim {
  color: #8b8f94;
}

.sb-up,
.sb-down {
  position: absolute;
  right: 3px;
}

.sb-up {
  top: 20px;
}

.sb-down {
  bottom: 2px;
}

.sb-thumb {
  position: absolute;
  right: 5px;
  top: 29px;
  width: 6px;
  height: 139px;
  background: #a9adb1;
}

/* property sheet */
.props {
  flex: 1;
  margin-top: 6px;
  min-height: 0;
  border-right: 1px solid #b8bcc0;
  border-bottom: 1px solid #b8bcc0;
  font-size: 15px;
}

.prop-head {
  height: 25px;
  display: flex;
  align-items: center;
  background: #a9adb1;
  border-bottom: 1px solid #8d9195;
  border-radius: 3px 3px 0 0;
  box-sizing: border-box;
}

.prop-head .c1 {
  width: 126px;
  padding-left: 12px;
  box-sizing: border-box;
  border-right: 1px solid #989ca0;
}

.prop-head .c2 {
  padding-left: 11px;
}

.prop-group {
  height: 26px;
  line-height: 26px;
  padding-left: 29px;
  background: #b8cde3;
  color: #5b7088;
}

.prop-row {
  height: 25px;
  display: flex;
  align-items: center;
  background: #fff;
  border-bottom: 1px solid #d9dbde;
  box-sizing: border-box;
  position: relative;
}

.prop-row .c1 {
  width: 126px;
  padding-left: 29px;
  box-sizing: border-box;
  border-right: 1px solid #d9dbde;
  line-height: 23px;
}

.prop-row .val {
  padding-left: 3px;
  line-height: 23px;
}

.prop-hook {
  position: absolute;
  left: 12px;
  top: 0;
  width: 13px;
  height: 12px;
  border-left: 1px solid #d9dbde;
  border-bottom: 1px solid #d9dbde;
}

.bottom-tabs {
  height: 21px;
  flex: none;
  display: flex;
}

.btab {
  width: 45px;
  text-align: center;
  line-height: 22px;
  background: #f2f3f4;
}

.btab.on {
  width: 47px;
  background: #b4b7ba;
}

/* center */
.center {
  width: 1124px;
  flex: none;
  padding-left: 7px;
  box-sizing: border-box;
  display: flex;
  flex-direction: column;
}

.toolbar {
  height: 36px;
  flex: none;
  display: flex;
  align-items: center;
  background: #fff;
}

.tsep {
  width: 1px;
  height: 30px;
  background: #c3c6ca;
}

.tsep.tall {
  height: 36px;
  background: #9da1a5;
}

.tdots {
  width: 0;
  height: 30px;
  border-left: 1px dotted #777;
}

.time-label {
  width: 34px;
  font-size: 15px;
  white-space: nowrap;
}

.combo,
.spin {
  height: 25px;
  display: flex;
  align-items: center;
  justify-content: space-between;
  padding: 0 8px 0 5px;
  border: 1px solid #b5b8bc;
  border-radius: 3px;
  box-sizing: border-box;
  background: #fff;
  font-family: "Noto Sans", sans-serif;
  font-size: 15px;
}

.w83 {
  width: 83px;
}

.w80 {
  width: 80px;
}

.slider {
  width: 83px;
  height: 3px;
  position: relative;
  background: #eee;
  border: 1px solid #c9ccd0;
  box-sizing: border-box;
  margin-top: -4px;
}

.thumb {
  position: absolute;
  left: -1px;
  top: -6px;
  width: 12px;
  height: 13px;
  background: #eef0f2;
  border: 1px solid #b5b8bc;
  box-sizing: border-box;
}

.spin {
  width: 52px;
}

.viewport {
  flex: 1;
  min-height: 0;
  position: relative;
  overflow: hidden;
  background: linear-gradient(#b8cde4, #e4e8ec);
}

.model {
  position: absolute;
  left: 340px;
  top: 153px;
}

.triad {
  position: absolute;
  left: 69px;
  top: 407px;
}

.legend {
  position: absolute;
  left: 1018px;
  color: #10243c;
}

.lg-p {
  top: 15px;
}

.lg-u {
  top: 287px;
}

.lg-name,
.lg-unit {
  width: 50px;
  text-align: center;
  font-size: 16px;
  line-height: 18px;
  white-space: nowrap;
  font-family: "Noto Sans", sans-serif;
}

.lg-name {
  font-size: 19px;
  padding-left: 2px;
}

.lg-body {
  display: flex;
  margin-top: 11px;
  height: 177px;
}

.lg-bar {
  width: 15px;
  background: #0000ee;
}

.lg-ticks {
  margin-left: 3px;
  margin-top: -9px;
  height: 195px;
  display: flex;
  flex-direction: column;
  justify-content: space-between;
  font-family: "Liberation Sans", sans-serif;
  font-size: 12.400px;
  line-height: 14px;
  color: #222;
}

.result-cap {
  position: absolute;
  left: 0;
  right: 0;
  bottom: 8px;
  text-align: center;
  font-size: 14px;
  line-height: 20px;
  color: #222;
}

.curve-dock {
  height: 234px;
  flex: none;
  display: flex;
  flex-direction: column;
}

.curve-head {
  height: 41px;
  flex: none;
  display: flex;
  align-items: center;
  padding: 0 9px 0 4px;
}

.curve-tab {
  width: 97px;
  height: 22px;
  flex: none;
  display: flex;
  align-items: center;
  background: #fff;
  border: 1px solid #a9adb1;
  border-left: 0;
  box-sizing: border-box;
  line-height: 20px;
}

.curve-tab span {
  margin-left: 10px;
}

.curve-win {
  flex: 1;
  margin-left: 1px;
  margin-right: 1px;
  padding: 3px 2px 0 3px;
  background: #a0a0a0;
  min-height: 0;
}

.win-bar {
  height: 37px;
  display: flex;
  align-items: center;
  background: #fff;
  padding-left: 1px;
  padding-right: 14px;
}

.win-logo {
  margin-top: 1px;
}

.win-title {
  margin-left: 2px;
  margin-right: auto;
  font-size: 15px;
}

.wb2 {
  margin-left: 22px;
}

.wb3 {
  margin-left: 22px;
}

.plot {
  width: 1090px;
  height: 106px;
  margin: 12px 0 0 9px;
  background: #fff;
  overflow: hidden;
}

/* right dock */
.right {
  flex: 1;
  min-width: 0;
  display: flex;
  flex-direction: column;
}

.right-head {
  padding-left: 12px;
  padding-right: 9px;
}

.report {
  flex: 1;
  min-height: 0;
  margin-left: 8px;
  position: relative;
  overflow: hidden;
  background: #fff;
  padding: 0 0 0 6px;
}

.log {
  margin: -10px 0 0;
  font-family: "Liberation Mono", monospace;
  font-size: 16.600px;
  line-height: 18px;
  color: #4c4c4c;
}

.log.ok {
  margin-top: 0;
  color: #f0a530;
}

.rs-up {
  position: absolute;
  right: 5px;
  top: 5px;
}

.rs-thumb {
  position: absolute;
  right: 7px;
  top: 670px;
  width: 6px;
  height: 111px;
  background: #a9adb1;
}
</style>
